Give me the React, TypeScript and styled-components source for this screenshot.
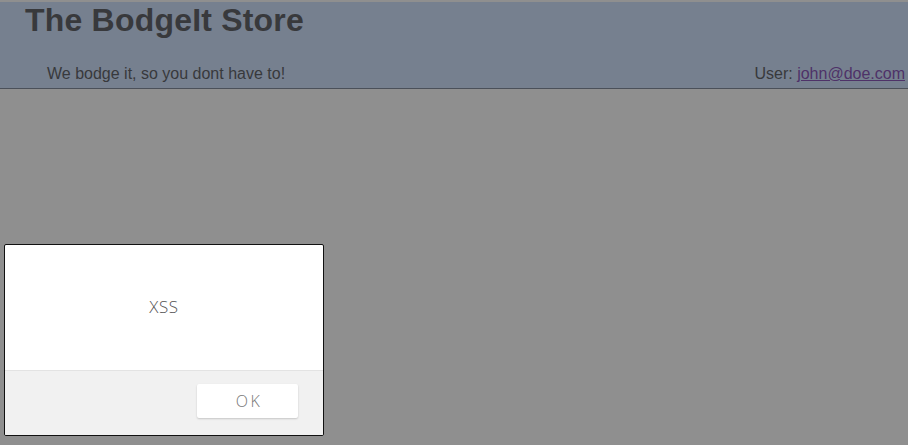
import React from "react";
import styled, { createGlobalStyle } from "styled-components";

const Global = createGlobalStyle`
  html, body { margin: 0; padding: 0; }
  body {
    width: 908px;
    height: 445px;
    overflow: hidden;
    background: #8f8f8f;
    font-family: "Liberation Sans", Arial, sans-serif;
  }
`;

const Page = styled.div`
  position: relative;
  width: 908px;
  height: 445px;
  padding-top: 2px;
  box-sizing: border-box;
  background: #8f8f8f;
`;

const Header = styled.header`
  height: 87px;
  box-sizing: border-box;
  background: #76808f;
  border-bottom: 1px solid #4b5059;
  display: flex;
  flex-direction: column;
  color: #38393c;
`;

const Title = styled.h1`
  margin: 0;
  padding: 0 0 0 25px;
  font-size: 32px;
  line-height: 36px;
  font-weight: bold;
  letter-spacing: 0.2px;
`;

const SubRow = styled.div`
  margin-top: 26px;
  display: flex;
  justify-content: space-between;
  align-items: baseline;
  padding: 0 3px 0 47px;
  font-size: 16px;
  line-height: 20px;
`;

const UserLink = styled.a`
  color: #4e3268;
  text-decoration: underline;
`;

const Dialog = styled.div`
  position: absolute;
  left: 4px;
  top: 244px;
  width: 320px;
  height: 192px;
  box-sizing: border-box;
  border: 1px solid #111;
  border-radius: 2px;
  background: #fff;
  display: flex;
  flex-direction: column;
  overflow: hidden;
`;

const Message = styled.div`
  height: 125px;
  display: flex;
  align-items: center;
  justify-content: center;
  font-family: "Open Sans", "Noto Sans", sans-serif;
  font-weight: 300;
  font-size: 17px;
  color: #555;
  letter-spacing: 0.6px;
  padding-bottom: 2px;
  box-sizing: border-box;
`;

const Footer = styled.div`
  flex: 1;
  background: #f1f1f1;
  border-top: 1px solid #e3e3e3;
  display: flex;
  justify-content: flex-end;
  align-items: flex-start;
  padding: 13px 25px 0 0;
`;

const OkButton = styled.button`
  width: 101px;
  height: 34px;
  border: none;
  border-radius: 2px;
  background: #fff;
  box-shadow: 0 1px 2px rgba(0, 0, 0, 0.18);
  font-family: "Open Sans", "Noto Sans", sans-serif;
  font-weight: 300;
  font-size: 16px;
  letter-spacing: 2.4px;
  color: #777;
  padding: 0 0 0 3px;
`;

export default function App() {
  return (
    <>
      <Global />
      <Page>
        <Header>
          <Title>The BodgeIt Store</Title>
          <SubRow>
            <span>We bodge it, so you dont have to!</span>
            <span>
              User: <UserLink href="#">john@doe.com</UserLink>
            </span>
          </SubRow>
        </Header>
        <Dialog>
          <Message>XSS</Message>
          <Footer>
            <OkButton>OK</OkButton>
          </Footer>
        </Dialog>
      </Page>
    </>
  );
}
